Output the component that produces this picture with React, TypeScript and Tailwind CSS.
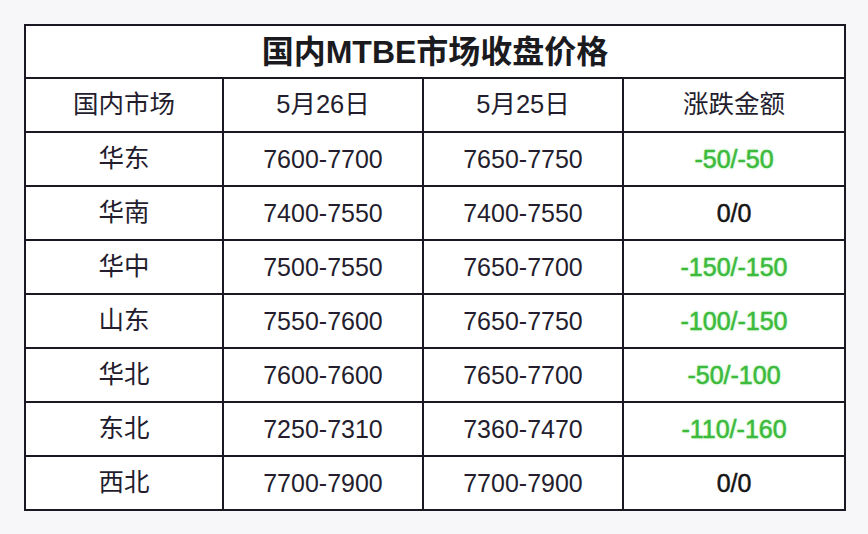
import React from "react";

const rows: [string, string, string, string, boolean][] = [
  ["华东", "7600-7700", "7650-7750", "-50/-50", true],
  ["华南", "7400-7550", "7400-7550", "0/0", false],
  ["华中", "7500-7550", "7650-7700", "-150/-150", true],
  ["山东", "7550-7600", "7650-7750", "-100/-150", true],
  ["华北", "7600-7600", "7650-7700", "-50/-100", true],
  ["东北", "7250-7310", "7360-7470", "-110/-160", true],
  ["西北", "7700-7900", "7700-7900", "0/0", false],
];

export default function App() {
  const font = { fontFamily: '"Liberation Sans", "Noto Sans CJK SC", sans-serif' };
  return (
    <div className="w-[868px] h-[534px] bg-[#f7f7f9] pt-[24px] pl-[24px]" style={font}>
      <table className="border-collapse bg-white text-[#241d2e] w-[820px] table-fixed">
        <colgroup>
          <col className="w-[198px]" />
          <col className="w-[200px]" />
          <col className="w-[200px]" />
          <col className="w-[222px]" />
        </colgroup>
        <tbody>
          <tr className="h-[53px]">
            <td colSpan={4} className="border-2 border-[#1b1824] text-center text-[32px] font-bold text-[#1a1a1f] leading-none">
              国内MTBE市场收盘价格
            </td>
          </tr>
          <tr className="h-[54px]">
            {["国内市场", "5月26日", "5月25日", "涨跌金额"].map((h) => (
              <td key={h} className="border-2 border-[#1b1824] text-center text-[25.5px] leading-none">
                {h}
              </td>
            ))}
          </tr>
          {rows.map(([m, a, b, c, g]) => (
            <tr key={m} className="h-[54px]">
              <td className="border-2 border-[#1b1824] text-center text-[25.5px] leading-none">{m}</td>
              <td className="border-2 border-[#1b1824] text-center text-[25px] leading-none">{a}</td>
              <td className="border-2 border-[#1b1824] text-center text-[25px] leading-none">{b}</td>
              <td
                className={
                  "border-2 border-[#1b1824] text-center text-[25px] leading-none [-webkit-text-stroke:0.5px_currentColor] " +
                  (g ? "text-[#3cba3c] [text-shadow:0_0_3px_rgba(80,220,80,0.45)]" : "text-[#151515]")
                }
              >
                {c}
              </td>
            </tr>
          ))}
        </tbody>
      </table>
    </div>
  );
}
